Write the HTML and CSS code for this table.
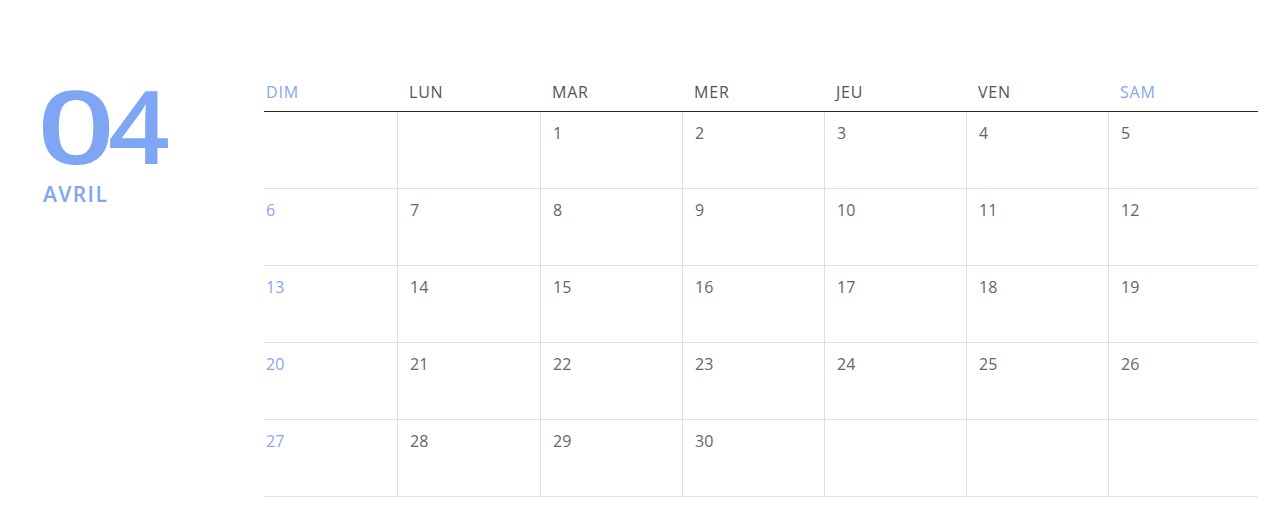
FILE: index.html
```html
<!DOCTYPE html>
<html lang="fr">
<head>
<meta charset="utf-8">
<link rel="stylesheet" href="styles.css">
</head>
<body>
<div class="page">
  <aside class="side">
    <div class="num"><span class="d0">0</span><span class="d4">4</span></div>
    <div class="month">AVRIL</div>
  </aside>
  <main class="cal">
    <div class="head blue">DIM</div>
    <div class="head">LUN</div>
    <div class="head">MAR</div>
    <div class="head">MER</div>
    <div class="head">JEU</div>
    <div class="head">VEN</div>
    <div class="head blue">SAM</div>

    <div class="cell"></div><div class="cell"></div><div class="cell">1</div><div class="cell">2</div><div class="cell">3</div><div class="cell">4</div><div class="cell">5</div>
    <div class="cell blue">6</div><div class="cell">7</div><div class="cell">8</div><div class="cell">9</div><div class="cell">10</div><div class="cell">11</div><div class="cell">12</div>
    <div class="cell blue">13</div><div class="cell">14</div><div class="cell">15</div><div class="cell">16</div><div class="cell">17</div><div class="cell">18</div><div class="cell">19</div>
    <div class="cell blue">20</div><div class="cell">21</div><div class="cell">22</div><div class="cell">23</div><div class="cell">24</div><div class="cell">25</div><div class="cell">26</div>
    <div class="cell blue">27</div><div class="cell">28</div><div class="cell">29</div><div class="cell">30</div><div class="cell"></div><div class="cell"></div><div class="cell"></div>
  </main>
</div>
</body>
</html>
```
FILE: styles.css
```css
html, body {
  margin: 0;
  padding: 0;
  background: #ffffff;
}
body {
  font-family: "Open Sans", "Noto Sans", sans-serif;
  color: #666666;
}
.page {
  display: flex;
  width: 1280px;
  height: 522px;
  padding-top: 72px;
  box-sizing: border-box;
}
.side {
  width: 264px;
  flex: none;
  box-sizing: border-box;
  padding-left: 37px;
}
.num {
  font-size: 102px;
  font-weight: 600;
  line-height: 90px;
  height: 90px;
  color: #7ea6f4;
  margin-top: 8px;
  white-space: nowrap;
}
.d0, .d4 {
  display: inline-block;
  transform-origin: left center;
}
.d0 {
  transform: scaleX(1.34);
  margin-right: 13px;
}
.d4 {
  transform: scaleX(1.06);
}
.month {
  font-size: 21px;
  font-weight: 600;
  letter-spacing: 1.4px;
  color: #7ea6f4;
  margin-top: 10px;
  padding-left: 6px;
}
.cal {
  display: grid;
  grid-template-columns: 133px 143px 142px 142px 142px 142px 150px;
  grid-auto-rows: 77px;
  grid-template-rows: 40px;
  align-content: start;
}
.head {
  font-size: 16px;
  line-height: 20px;
  padding: 10px 0 0 12px;
  border-bottom: 1px solid #2a2a2a;
  color: #555555;
  letter-spacing: 0.8px;
}
.cell {
  font-size: 16px;
  line-height: 20px;
  padding: 11px 0 0 12px;
  border-bottom: 1px solid #e2dee6;
  border-left: 1px solid #e2dee6;
  color: #666666;
}
.head:nth-child(7n+1), .cell:nth-child(7n+1) {
  padding-left: 2px;
  border-left: none;
}
.head.blue, .cell.blue {
  color: #86a6ef;
}
```
